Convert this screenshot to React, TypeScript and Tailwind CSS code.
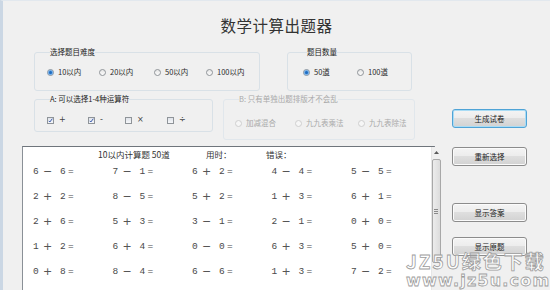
import React from "react";

const cjk = "font-['Noto_Sans_CJK_SC',sans-serif]";

const Radio: React.FC<{ label: string; checked?: boolean; disabled?: boolean; width: string }> = ({ label, checked, disabled, width }) => (
  <div className={`flex items-center gap-[4px] h-[10px] shrink-0 ${width}`}>
    <span
      className={`w-[7px] h-[7px] rounded-full border flex items-center justify-center shrink-0 ${
        disabled ? "border-[#cfcfcf] bg-[#f6f6f6]" : "border-[#8f9499] bg-[linear-gradient(#e6e6e6,#fbfbfb)]"
      }`}
    >
      {checked && <span className="w-[3px] h-[3px] rounded-full bg-[#1e6cc0] shadow-[0_0_1px_1px_#5fa3e6]" />}
    </span>
    <span className={`text-[7.5px] leading-[10px] whitespace-nowrap ${disabled ? "text-[#a9a9a9]" : "text-[#2a2a2a]"}`}>{label}</span>
  </div>
);

const Check: React.FC<{ label: string; checked?: boolean; width: string }> = ({ label, checked, width }) => (
  <div className={`flex items-center gap-[5px] h-[10px] shrink-0 ${width}`}>
    <span className="w-[7px] h-[7px] border border-[#8f9499] bg-[linear-gradient(#dfe3ea,#f6f7f9)] flex items-center justify-center shrink-0">
      {checked && (
        <svg width="7" height="7" viewBox="0 0 7 7">
          <path d="M1 4 L2.6 5.6 L6 1" fill="none" stroke="#2c4fa8" strokeWidth="1.3" />
        </svg>
      )}
    </span>
    <span className="text-[8px] leading-[10px] text-[#444] font-['DejaVu_Sans',sans-serif]">{label}</span>
  </div>
);

const Btn: React.FC<{ label: string; focus?: boolean; mt: string }> = ({ label, focus, mt }) => (
  <button
    className={`${mt} w-[75px] h-[19px] rounded-[3px] border text-[7.5px] text-[#1a1a1a] flex items-center justify-center bg-[linear-gradient(#f4f4f4,#ececec_50%,#dedede_50%,#d2d2d2)] ${
      focus ? "border-[#4fa3d6] shadow-[inset_0_0_0_1px_#a9dcf5]" : "border-[#8c8c8c] shadow-[inset_0_0_0_1px_#fbfbfb]"
    }`}
  >
    {label}
  </button>
);

const rows: string[][] = [
  ["6-6", "7-1", "6+2", "4-4", "5-5"],
  ["2+2", "8-5", "5+2", "1+3", "6+1"],
  ["2+6", "5+3", "3-1", "2-1", "0+0"],
  ["1+2", "6+4", "0-0", "6+3", "5+0"],
  ["0+8", "8-4", "6-6", "1+3", "7-2"],
  ["3+5", "4+2", "9-3", "2+4", "8-1"],
];

const Expr: React.FC<{ e: string }> = ({ e }) => (
  <div className="w-[79.5px] shrink-0 flex items-center text-[9.5px] text-[#4a4a4a] font-['Liberation_Mono',monospace]">
    <span className="w-[10px]">{e[0]}</span>
    <span className="w-[17px] text-[11px] font-['DejaVu_Sans',sans-serif] text-[#555]">{e[1] === "-" ? "−" : "+"}</span>
    <span className="w-[8px]">{e[2]}</span>
    <span>=</span>
  </div>
);

const box = "min-w-0 shrink-0 border rounded-[3px]";

const App: React.FC = () => {
  return (
    <div className={`relative w-[550px] h-[290px] overflow-hidden bg-[#f0f0f0] border-l-[3px] border-l-[#cbd7e4] border-t border-t-[#e2e8ee] ${cjk}`}>
      <div className="h-[46px] pt-[14px] text-center text-[15.5px] leading-[20px] tracking-[0.5px] text-[#333]">数学计算出题器</div>

      <div className="flex">
        {/* left column */}
        <div className="w-[437px] shrink-0">
          <div className="flex pl-[31px] gap-[27px]">
            <fieldset className={`${box} w-[226px] h-[44px] border-[#d9e1e7] px-[12px]`}>
              <legend className="ml-[3px] text-[7.5px] leading-[10px] text-[#222]">选择题目难度</legend>
              <div className="flex mt-[10px]">
                <Radio label="10以内" checked width="w-[52px]" />
                <Radio label="20以内" width="w-[55px]" />
                <Radio label="50以内" width="w-[52px]" />
                <Radio label="100以内" width="w-[40px]" />
              </div>
            </fieldset>
            <fieldset className={`${box} w-[125px] h-[44px] border-[#d9e1e7] px-[15px]`}>
              <legend className="ml-[4px] text-[7.5px] leading-[10px] text-[#222]">题目数量</legend>
              <div className="flex mt-[10px]">
                <Radio label="50道" checked width="w-[54px]" />
                <Radio label="100道" width="w-[36px]" />
              </div>
            </fieldset>
          </div>

          <div className="flex items-start pl-[31px] gap-[10px] mt-[3px]">
            <fieldset className={`${box} w-[179px] h-[38px] border-[#d9e1e7] px-[12px]`}>
              <legend className="ml-[3px] text-[7.5px] leading-[10px] text-[#222]">A: 可以选择1-4种运算符</legend>
              <div className="flex mt-[11px]">
                <Check label="+" checked width="w-[41px]" />
                <Check label="-" checked width="w-[37px]" />
                <Check label="×" width="w-[42px]" />
                <Check label="÷" width="w-[20px]" />
              </div>
            </fieldset>
            <fieldset className={`${box} w-[192px] h-[46px] border-[#e1e7ec] px-[11px]`}>
              <legend className="ml-[4px] text-[7.5px] leading-[10px] text-[#a9a9a9]">B: 只有单独出题排版才不会乱</legend>
              <div className="flex mt-[14px]">
                <Radio label="加减混合" disabled width="w-[60px]" />
                <Radio label="九九表乘法" disabled width="w-[63px]" />
                <Radio label="九九表除法" disabled width="w-[46px]" />
              </div>
            </fieldset>
          </div>

          {/* text area */}
          <div className="ml-[19px] mt-[6px] w-[413px] h-[160px] bg-white border border-[#8a9097] border-t-[#6f757c] flex">
            <div className="flex-1 pl-[10px]">
              <div className="flex h-[13px] items-center pt-[2px] pl-[65px] text-[8.5px] text-[#333]">
                <span className="w-[108px]">10以内计算题 50道</span>
                <span className="w-[60px]">用时：</span>
                <span>错误：</span>
              </div>
              {rows.map((r, i) => (
                <div key={i} className="flex h-[25px] items-center">
                  {r.map((e, j) => (
                    <Expr key={j} e={e} />
                  ))}
                </div>
              ))}
            </div>
            {/* scrollbar */}
            <div className="w-[11px] bg-[#f0f0f0] border-l border-[#e6e6e6] flex flex-col items-center">
              <svg className="mt-[4px]" width="5" height="3" viewBox="0 0 5 3">
                <path d="M0 3 L2.5 0 L5 3 Z" fill="#5a5a5a" />
              </svg>
              <div className="mt-[5px] w-[9px] h-[104px] rounded-[2px] border border-[#a8a8a8] bg-[linear-gradient(90deg,#ececec,#dcdcdc)] flex flex-col items-center justify-center gap-[1px]">
                <span className="w-[4px] h-px bg-[#8a8a8a]" />
                <span className="w-[4px] h-px bg-[#8a8a8a]" />
                <span className="w-[4px] h-px bg-[#8a8a8a]" />
              </div>
            </div>
          </div>
        </div>

        {/* right buttons */}
        <div className="flex flex-col pl-[12px]">
          <Btn label="生成试卷" focus mt="mt-[62px]" />
          <Btn label="重新选择" mt="mt-[19px]" />
          <Btn label="显示答案" mt="mt-[37px]" />
          <Btn label="显示原题" mt="mt-[15px]" />
        </div>
      </div>

      {/* watermark */}
      <div className="absolute left-[403px] top-[249px] flex flex-col items-start pointer-events-none">
        <span className="text-[19px] leading-[22px] font-bold tracking-[2px] text-white/80 [-webkit-text-stroke:0.8px_#9d9d9d]">JZ5U绿色下载</span>
        <span className="text-[16px] leading-[18px] font-bold tracking-[1.2px] text-white/80 [-webkit-text-stroke:0.8px_#9d9d9d] font-['DejaVu_Sans',sans-serif]">www.jz5u.com</span>
      </div>
    </div>
  );
};

export default App;
